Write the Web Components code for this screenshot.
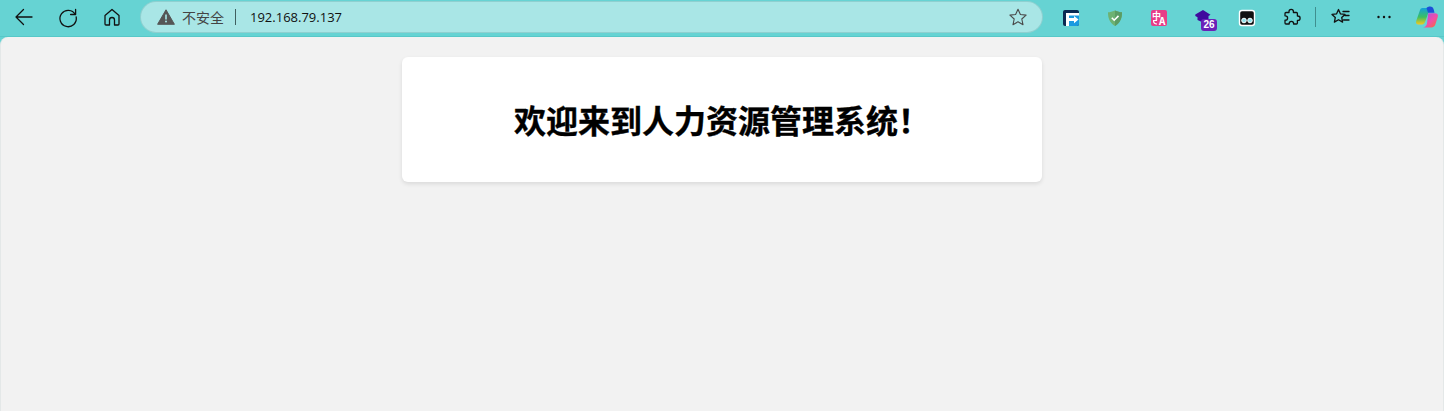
<!DOCTYPE html>
<html lang="zh"><head><meta charset="utf-8"><title>人力资源管理系统</title>
<style>
html,body{margin:0;height:100%;overflow:hidden}
body{background:#66d3d3;font-family:"Open Sans","Noto Sans CJK SC",sans-serif}
</style></head><body>
<browser-window>
  <browser-toolbar slot="toolbar"></browser-toolbar>
  <welcome-card>欢迎来到人力资源管理系统！</welcome-card>
</browser-window>
<script>
class BrowserWindow extends HTMLElement{constructor(){super();this.attachShadow({mode:'open'}).innerHTML=`<style>
:host{display:flex;flex-direction:column;width:1444px;height:411px;background:#66d3d3}
main{flex:1;background:#f2f2f2;border-radius:8px 8px 0 0;display:flex;flex-direction:column;align-items:center;padding-top:20px;box-sizing:border-box;border-left:1px solid #e4e8e8;border-right:1px solid #e4e8e8}
</style><slot name="toolbar"></slot><main><slot></slot></main>`}}
class WelcomeCard extends HTMLElement{constructor(){super();this.attachShadow({mode:'open'}).innerHTML=`<style>
:host{display:block;width:640px;height:125px;box-sizing:border-box;background:#fff;border-radius:6px;box-shadow:0 2px 4px rgba(0,0,0,.1);padding-top:39px;text-align:center}
h1{margin:0;font:700 32px/46px "Noto Sans CJK SC","Noto Sans CJK JP",sans-serif;color:#000;-webkit-text-stroke:.35px #000}
</style><h1><slot></slot></h1>`}}
const S='fill="none" stroke="#111" stroke-width="1.3" stroke-linecap="round" stroke-linejoin="round"';
const icon=(w,inner)=>`<svg width="${w}" height="24" viewBox="0 0 24 24">${inner}</svg>`;
class BrowserToolbar extends HTMLElement{constructor(){super();this.attachShadow({mode:'open'}).innerHTML=`<style>
:host{display:flex;align-items:flex-start;height:37px;box-sizing:border-box;border-bottom:1px solid #57c8c8}
.b{flex:none;width:44px;height:34px;display:flex;align-items:center;justify-content:center}
.b.first{margin-left:2px}
.addr{flex:none;width:901px;height:30px;margin:2px 7px 0 7px;background:#a9e6e6;border-radius:15px;box-shadow:0 0 0 1px #8fd0d0;display:flex;align-items:center;box-sizing:border-box;padding-left:16px;color:#333}
.warn{width:18px;height:16px;flex:none}
.ns{font:14px/18px "Noto Sans CJK SC",sans-serif;color:#444;margin-left:7px;width:42px;white-space:nowrap}
.sep{width:1px;height:16px;background:#3f5f5f;margin:0 14px 0 11px;flex:none}
.ip{font:13px/18px "Open Sans",sans-serif;color:#111;white-space:nowrap;flex:1}
.star{margin-right:12px;display:flex}
.tsep{flex:none;width:1px;height:20px;background:#3f8f8f;margin:7px 2px 0 2px}
.ext{position:relative}
.badge{position:absolute;left:20px;top:19px;width:16px;height:12px;border-radius:3px;background:#6a22b8;color:#fff;font:700 10px/12px "Liberation Sans",sans-serif;text-align:center}
.cop{width:38px;box-sizing:border-box;justify-content:flex-start;padding-left:9px}
.cn{font:700 9px/10px "Noto Sans CJK SC",sans-serif;fill:#fff}
</style>
<div class="b first">${icon(24,`<path d="M20 12H4M11.500 4.500 4 12l7.500 7.500" ${S} stroke-width="1.4"/>`)}</div>
<div class="b">${icon(24,`<path d="M19.300 9.500A8.200 8.200 0 1 0 20.200 12M19.600 4.500v5h-5" ${S}/>`)}</div>
<div class="b">${icon(24,`<path d="M5 10.500 12 4.500l7 6V19a1 1 0 0 1-1 1h-3.500v-5a2.500 2.500 0 0 0-5 0v5H6a1 1 0 0 1-1-1z" ${S}/>`)}</div>
<div class="addr">
 <svg class="warn" viewBox="0 0 18 16"><path d="M9 .8 17.400 15.300H.6z" fill="#555" stroke="#555" stroke-linejoin="round"/><path d="M9 5.500v5" stroke="#a9e6e6" stroke-width="1.600"/><circle cx="9" cy="12.600" r="1" fill="#a9e6e6"/></svg>
 <span class="ns">不安全</span><span class="sep"></span><span class="ip">192.168.79.137</span>
 <span class="star">${icon(24,`<path d="M12 4.200l2.400 5.300 5.700.6-4.300 3.900 1.200 5.700-5-2.900-5 2.900 1.200-5.700-4.300-3.900 5.700-.6z" fill="none" stroke="#4a4a4a" stroke-width="1.100" stroke-linejoin="round"/>`)}</span>
</div>
<div class="b">${icon(24,`<rect x="4" y="5" width="16" height="16" rx="2" fill="#0b2a52"/><path d="M8 9h12v10a2 2 0 0 1-2 2H8z" fill="#1a9ae0"/><path d="M7 8h13v2.600H10v2.400h5v-2l4.500 3.600L15 18.200v-2.200h-5v5H7z" fill="#fff"/>`)}</div>
<div class="b">${icon(24,`<path d="M12 5.500c2.800 1.400 5 1.700 7 1.700 0 5.800-1.500 10.500-7 13.800-5.500-3.300-7-8-7-13.800 2 0 4.200-.3 7-1.700z" fill="#6db272"/><path d="M12 5.500V21c5.500-3.300 7-8 7-13.800-2 0-4.200-.3-7-1.700z" fill="#5a9c64"/><path d="M8.800 12.800l2.400 2.400 4.300-4.300" fill="none" stroke="#fff" stroke-width="1.600"/>`)}</div>
<div class="b">${icon(24,`<rect x="4" y="5" width="16" height="16" rx="2" fill="#e83d88"/><text x="5" y="13.500" class="cn">中</text><text x="12" y="20" class="cn" style="font-size:10px">A</text><path d="M6 15.500h4M6.500 15.500c0 2.500 1.500 3.500 3.500 3.500" fill="none" stroke="#fff" stroke-width="1.200"/>`)}</div>
<div class="b ext">${icon(24,`<path d="M12 5l7.500 4.700-2 1.300V15l-5.500 2.500L6.500 15v-2.800L4.300 11V9.500z" fill="#3f0a9e"/>`)}<span class="badge">26</span></div>
<div class="b">${icon(24,`<rect x="4.500" y="5.500" width="15" height="15" rx="2.500" fill="#111" stroke="#fff" stroke-width="1.400"/><circle cx="9" cy="15.500" r="2.300" fill="#8fe3ec" stroke="#fff"/><circle cx="15" cy="15.500" r="2.300" fill="#8fe3ec" stroke="#fff"/>`)}</div>
<div class="b">${icon(24,`<path d="M10 6.500a2.200 2.200 0 0 1 4.400 0v1h3a1 1 0 0 1 1 1V11h.5a2.200 2.200 0 0 1 0 4.400h-.5V18a1 1 0 0 1-1 1h-2.800v-.4a2.200 2.200 0 0 0-4.400 0v.4H7a1 1 0 0 1-1-1v-2.800h.4a2.200 2.200 0 0 0 0-4.400H6V8.500a1 1 0 0 1 1-1h3z" ${S}/>`)}</div>
<div class="tsep"></div>
<div class="b">${icon(24,`<path d="M10.500 4.500l2 4.400 4.500.5-3.300 3 .9 4.700-4.100-2.400-4.100 2.400.9-4.700-3.300-3 4.500-.5zM15 6.500h6M17 10.500h4M15.500 15h5.500" ${S}/>`)}</div>
<div class="b">${icon(24,`<circle cx="6.500" cy="12" r="1.200" fill="#111"/><circle cx="12" cy="12" r="1.200" fill="#111"/><circle cx="17.500" cy="12" r="1.200" fill="#111"/>`)}</div>
<div class="b cop">${icon(24,`<defs><linearGradient id="g1" x1="0" y1="0" x2="0" y2="1"><stop offset="0" stop-color="#12a0dc"/><stop offset=".55" stop-color="#3cc060"/><stop offset="1" stop-color="#f7c81e"/></linearGradient><linearGradient id="g2" x1="0" y1="0" x2="1" y2="1"><stop offset="0" stop-color="#a050f0"/><stop offset=".55" stop-color="#f04ea8"/><stop offset="1" stop-color="#f8702a"/></linearGradient></defs><path d="M7.500 3H15l-4.200 12c-.8 2.300-1.500 4-3.500 4.500H3.500C1.500 19.500.6 18 1.200 16L5 5c.4-1.300 1.300-2 2.500-2z" fill="url(#g1)"/><path d="M15 1.500c2.200 0 3.200 1 3.700 3l.8 3.200h-6.500L11.500 3c1-1 2-1.500 3.500-1.500z" fill="#1c4ed8"/><path d="M13.200 8.200H20c2.300 0 3.400 1.500 2.800 3.500l-2.300 7.300c-.6 2-2 3.500-4.500 3.500H8c2.500-.4 3.500-2 4-4z" fill="url(#g2)"/>`)}</div>`}}
customElements.define('browser-window',BrowserWindow);
customElements.define('browser-toolbar',BrowserToolbar);
customElements.define('welcome-card',WelcomeCard);
</script></body></html>
